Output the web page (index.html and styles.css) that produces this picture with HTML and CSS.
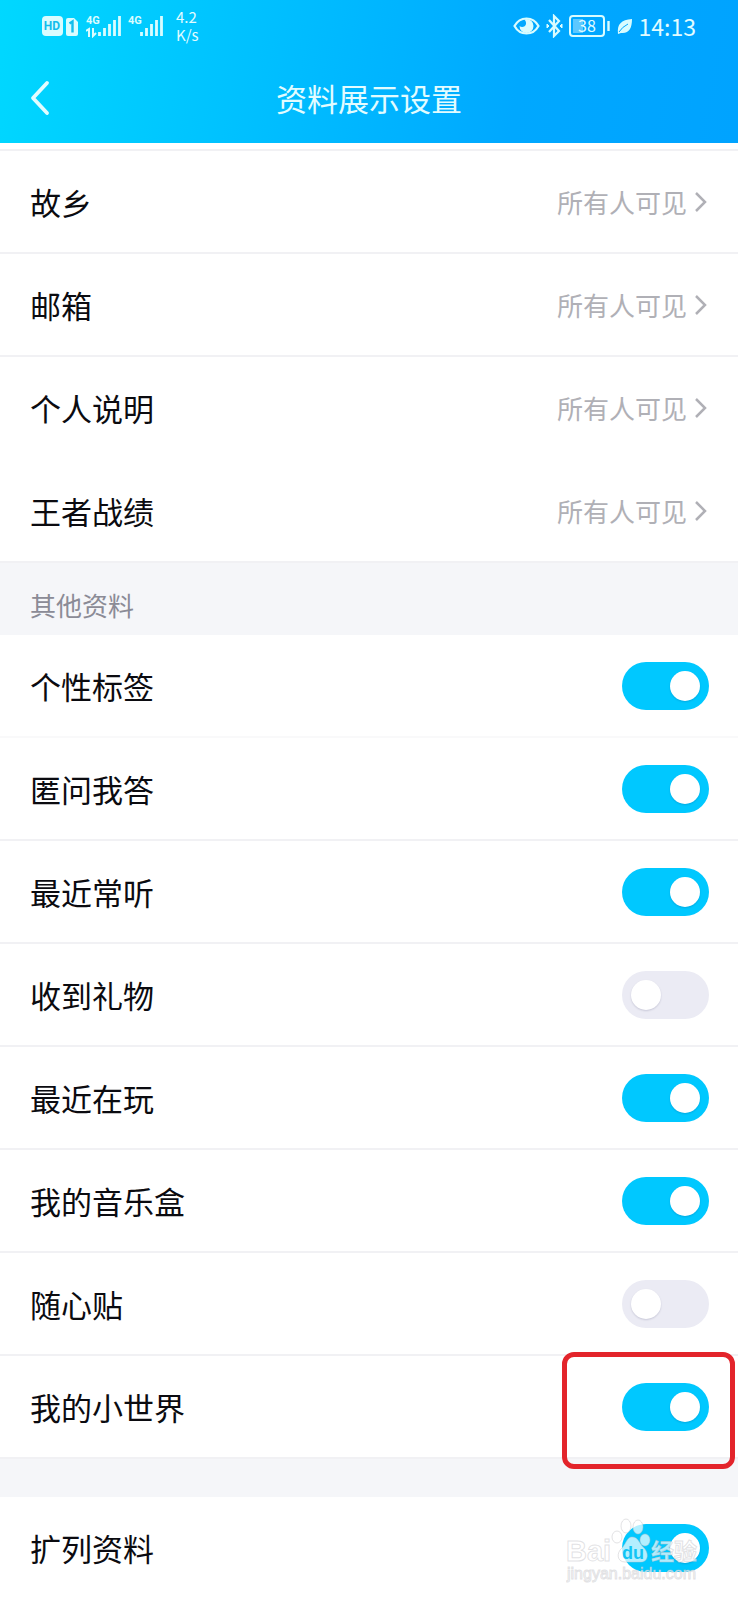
FILE: index.html
```html
<!DOCTYPE html>
<html lang="zh-CN">
<head>
  <meta charset="UTF-8">
  <meta name="viewport" content="width=device-width, initial-scale=1">
  <title>资料展示设置</title>
  <link rel="stylesheet" href="styles.css">
</head>
<body>
  <header class="header">
    <div class="status-bar">
      <div class="status-left">
        <svg class="icon" width="37" height="24" viewBox="0 0 37 24">
          <rect x="0" y="2" width="21" height="20" rx="4" fill="#d9fcff"/>
          <text x="10" y="16" class="badge-text">HD</text>
          <path d="M26 4h6l4 4v12a2 2 0 0 1-2 2h-8a2 2 0 0 1-2-2V6a2 2 0 0 1 2-2z" fill="#d9fcff"/>
          <path d="M27.500 9.500l3-2v11" fill="none" stroke="#12bdec" stroke-width="2.400"/>
        </svg>
        <svg class="icon" width="35" height="24" viewBox="0 0 35 24">
          <text x="0" y="10" class="net-text">4G</text>
          <path d="M0 17l3-2v8M7 14v8l3-3" fill="none" stroke="#d9fcff" stroke-width="2"/>
          <path d="M13.500 22v-4M18.500 22v-8M23.500 22v-12M28.500 22v-16M33.500 22v-20" stroke="#d9fcff" stroke-width="2.800"/>
        </svg>
        <svg class="icon" width="35" height="24" viewBox="0 0 35 24">
          <text x="0" y="10" class="net-text">4G</text>
          <path d="M13.500 22v-4M18.500 22v-8M23.500 22v-12M28.500 22v-16M33.500 22v-20" stroke="#d9fcff" stroke-width="2.800"/>
        </svg>
        <div class="speed">4.2<br>K/s</div>
      </div>
      <div class="status-right">
        <svg class="icon" width="27" height="24" viewBox="0 0 27 24">
          <path d="M1.500 12C7 2 20 2 25.500 12C20 22 7 22 1.500 12z" fill="none" stroke="#d9fcff" stroke-width="2.200"/>
          <path d="M13.500 5a7 7 0 1 1-7 7c2 2 6 1 6.500-2c.3-2-.5-3-1.500-4.500z" fill="#d9fcff"/>
        </svg>
        <svg class="icon" width="17" height="24" viewBox="0 0 17 24">
          <path d="M3 6l10 11-5 5V2l5 5L3 18" fill="none" stroke="#d9fcff" stroke-width="2.200"/>
          <path d="M1 10l2 2-2 2zM16 10l-2 2 2 2z" fill="#d9fcff" stroke="#d9fcff"/>
        </svg>
        <svg class="icon" width="42" height="24" viewBox="0 0 42 24">
          <rect x="1" y="2" width="34" height="20" rx="3" fill="none" stroke="#d9fcff" stroke-width="2"/>
          <rect x="4" y="5" width="10" height="14" fill="#5cc8ff"/>
          <path d="M39.500 7v10" stroke="#d9fcff" stroke-width="2.400"/>
          <text x="18" y="18" class="battery-text">38</text>
        </svg>
        <svg class="icon" width="16" height="24" viewBox="0 0 16 24">
          <path d="M15 5C15 14 12 20 4 19L1 20C0 10 4 6 15 5z" fill="#d9fcff"/>
          <path d="M2 18Q5 13 11 10" fill="none" stroke="#04a9ff" stroke-width="1"/>
        </svg>
        <time class="clock">14:13</time>
      </div>
    </div>
    <div class="title-bar">
      <button class="back" type="button" aria-label="返回">
        <svg class="icon" width="20" height="36" viewBox="0 0 20 36">
          <path d="M17 3L3 18l14 15" fill="none" stroke="#e2fcff" stroke-width="3.800" stroke-linecap="round" stroke-linejoin="round"/>
        </svg>
      </button>
      <h1 class="title">资料展示设置</h1>
    </div>
  </header>

  <main>
    <section class="group group-first">
      <button class="row" type="button">
        <span class="label">故乡</span>
        <span class="value">所有人可见</span>
        <svg class="arrow" width="12" height="20" viewBox="0 0 12 20"><path d="M1 1l9 9-9 9"/></svg>
      </button>
      <button class="row" type="button">
        <span class="label">邮箱</span>
        <span class="value">所有人可见</span>
        <svg class="arrow" width="12" height="20" viewBox="0 0 12 20"><path d="M1 1l9 9-9 9"/></svg>
      </button>
      <button class="row no-line" type="button">
        <span class="label">个人说明</span>
        <span class="value">所有人可见</span>
        <svg class="arrow" width="12" height="20" viewBox="0 0 12 20"><path d="M1 1l9 9-9 9"/></svg>
      </button>
      <button class="row" type="button">
        <span class="label">王者战绩</span>
        <span class="value">所有人可见</span>
        <svg class="arrow" width="12" height="20" viewBox="0 0 12 20"><path d="M1 1l9 9-9 9"/></svg>
      </button>
    </section>

    <h2 class="section-title">其他资料</h2>

    <section class="group">
      <label class="row light-line">
        <span class="label">个性标签</span>
        <input class="switch" type="checkbox" checked>
      </label>
      <label class="row">
        <span class="label">匿问我答</span>
        <input class="switch" type="checkbox" checked>
      </label>
      <label class="row">
        <span class="label">最近常听</span>
        <input class="switch" type="checkbox" checked>
      </label>
      <label class="row">
        <span class="label">收到礼物</span>
        <input class="switch" type="checkbox">
      </label>
      <label class="row">
        <span class="label">最近在玩</span>
        <input class="switch" type="checkbox" checked>
      </label>
      <label class="row">
        <span class="label">我的音乐盒</span>
        <input class="switch" type="checkbox" checked>
      </label>
      <label class="row">
        <span class="label">随心贴</span>
        <input class="switch" type="checkbox">
      </label>
      <label class="row marked">
        <span class="label">我的小世界</span>
        <input class="switch" type="checkbox" checked>
      </label>
    </section>

    <section class="group group-last">
      <label class="row no-line">
        <span class="label">扩列资料</span>
        <input class="switch" type="checkbox" checked>
      </label>
      <svg class="watermark" width="140" height="72" viewBox="0 0 140 72">
        <g class="mark">
          <text x="0" y="46" class="mark-name">Bai</text>
          <ellipse cx="51" cy="22" rx="5" ry="6"/>
          <ellipse cx="60" cy="11" rx="5" ry="7"/>
          <ellipse cx="72" cy="12" rx="5" ry="7"/>
          <ellipse cx="79" cy="25" rx="5" ry="6"/>
          <path d="M66 22c6 0 7 6 11 10c6 5 6 15-2 15c-5 0-11 0-16 0c-8 0-9-9-3-14c4-4 5-11 10-11z"/>
          <text x="85" y="45" class="mark-cn">经验</text>
          <text x="1" y="64" class="mark-url">jingyan.baidu.com</text>
        </g>
        <text x="56" y="44" class="mark-du">du</text>
      </svg>
    </section>
  </main>
</body>
</html>
```
FILE: styles.css
```css
*,
*::before,
*::after {
  box-sizing: border-box;
}

body {
  margin: 0;
  background: #fff;
  color: #0b0b10;
  font-family: "Noto Sans CJK SC", sans-serif;
}

button {
  border: none;
  background: none;
  padding: 0;
  color: inherit;
  font-family: inherit;
  text-align: left;
  cursor: pointer;
}

.icon,
.arrow {
  display: block;
  flex: none;
}

/* header */
.header {
  height: 143px;
  background: linear-gradient(100deg, #00d8ff 0%, #00c0ff 35%, #00a8ff 70%, #00a3ff 100%);
  color: #e2fcff;
}

.status-bar {
  display: flex;
  justify-content: space-between;
  align-items: center;
  height: 52px;
  padding: 0 42px;
}

.status-left,
.status-right {
  display: flex;
  align-items: center;
  gap: 7px;
}

.status-right {
  gap: 6px;
}

.speed {
  margin-left: 6px;
  font-size: 15px;
  line-height: 18px;
}

.clock {
  font-size: 23px;
  line-height: 24px;
}

.badge-text {
  font: bold 12px Roboto, sans-serif;
  fill: #12bdec;
  text-anchor: middle;
}

.net-text {
  font: bold 11px Roboto, sans-serif;
  fill: #d9fcff;
}

.battery-text {
  font: 16px "Noto Sans CJK SC", sans-serif;
  fill: #e2fcff;
  text-anchor: middle;
}

.title-bar {
  display: grid;
  grid-template-columns: 1fr auto 1fr;
  align-items: center;
  height: 91px;
  padding: 0 30px;
}

.title {
  margin: 0;
  font-size: 31px;
  font-weight: 400;
  line-height: 46px;
}

/* rows */
.group-first {
  margin-top: 6px;
  border-top: 2px solid #f1f1f4;
}

.row {
  display: flex;
  align-items: center;
  position: relative;
  width: 100%;
  height: 103px;
  padding: 0 29px 0 30px;
  border-bottom: 2px solid #f1f1f4;
}

.row.no-line {
  border-bottom-color: transparent;
}

.row.light-line {
  border-bottom-color: #f9f9fa;
}

.label {
  flex: 1;
  font-size: 31px;
  line-height: 46px;
}

.value {
  color: #b0b0b6;
  font-size: 26px;
  line-height: 38px;
}

.arrow {
  margin: 0 2px 0 8px;
  fill: none;
  stroke: #b0b0b6;
  stroke-width: 2.5;
}

.section-title {
  margin: 0;
  padding: 23px 30px 12px;
  background: #f5f6f9;
  color: #8b8b96;
  font-size: 26px;
  font-weight: 400;
  line-height: 37px;
}

/* switch */
.switch {
  appearance: none;
  display: flex;
  align-items: center;
  width: 87px;
  height: 48px;
  margin: 0;
  padding: 0 9px;
  border-radius: 24px;
  background: #ebebf4;
  cursor: pointer;
}

.switch::before {
  content: "";
  width: 30px;
  height: 30px;
  border-radius: 50%;
  background: #fff;
  box-shadow: 0 1px 2px rgba(0, 0, 60, 0.15);
}

.switch:checked {
  justify-content: flex-end;
  background: #00c8ff;
}

/* red frame round the last switch */
.marked::after {
  content: "";
  position: absolute;
  z-index: 1;
  top: -4px;
  right: 3px;
  bottom: -12px;
  width: 173px;
  border: 5px solid #e3242b;
  border-radius: 12px;
}

.group-last {
  position: relative;
  border-top: 38px solid #f5f6f9;
}

.watermark {
  position: absolute;
  right: 32px;
  bottom: 13px;
  pointer-events: none;
}

.mark {
  fill: rgba(255, 255, 255, 0.7);
  stroke: rgba(190, 190, 195, 0.45);
  stroke-width: 1;
}

.mark-name {
  font: bold 29px "Liberation Sans", sans-serif;
}

.mark-cn {
  font: bold 23px "Noto Sans CJK SC", sans-serif;
}

.mark-url {
  font: 16px "Liberation Sans", sans-serif;
}

.mark-du {
  font: bold 18px "Liberation Sans", sans-serif;
  fill: #12c4f4;
}
```
